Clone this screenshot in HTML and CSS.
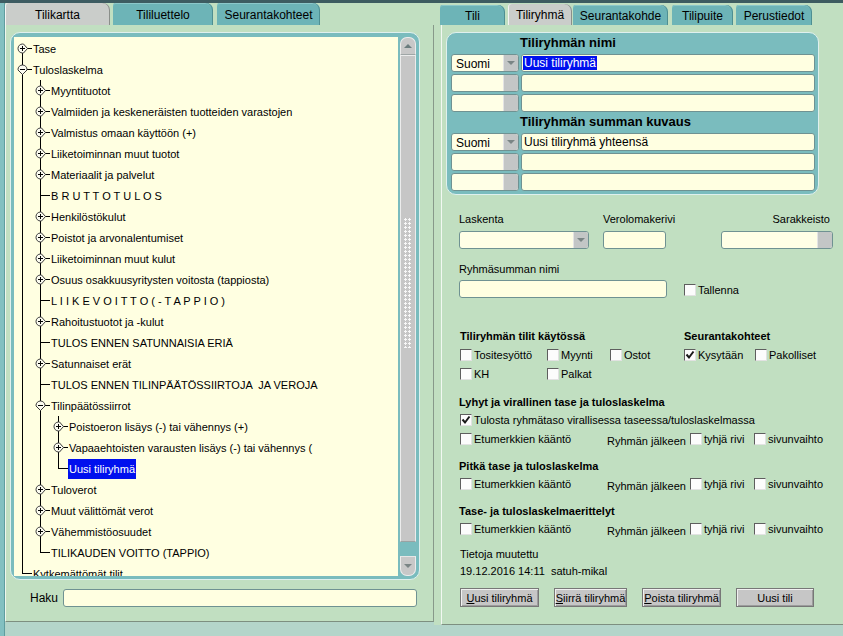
FILE: index.html
```
<!DOCTYPE html>
<html lang="fi">
<head>
<meta charset="utf-8">
<title>Tiliryhmä</title>
<link rel="stylesheet" href="styles.css">
</head>
<body>
<svg class="defs" width="0" height="0" aria-hidden="true">
  <symbol id="plus" viewBox="0 0 11 11"><path d="M5.5 1H6.5L10.5 5.5 6.5 10H5.5A4.5 4.5 0 0 1 5.5 1Z" fill="#fbfbf0" stroke="#3a3a3a"/><path d="M3 5.5H8M5.5 3V8" stroke="#000"/></symbol>
  <symbol id="minus" viewBox="0 0 11 11"><path d="M1 5.5A4.5 4.5 0 0 1 10 5.5V6L5.5 10.5 1 6Z" fill="#fbfbf0" stroke="#3a3a3a"/><path d="M3 5.5H8" stroke="#000"/></symbol>
  <symbol id="check" viewBox="0 0 10 10"><path d="M1.5 4.5 4 7.5 8.5 1.5" fill="none" stroke="#1a1a1a" stroke-width="2"/></symbol>
</svg>
<div class="topbar"></div>
<div class="main">
  <div class="edge"></div>
  <section class="left">
    <nav class="tabs tabs-left">
      <div class="tab active tw105">Tilikartta</div>
      <div class="tab tw100">Tililuettelo</div>
      <div class="tab tw103">Seurantakohteet</div>
    </nav>
    <div class="panel lpanel">
      <div class="treeframe">
        <div class="tree">
          <div class="row"><span class="c first"><svg class="ic"><use href="#plus"/></svg></span><span class="lb">Tase</span></div>
          <div class="row"><span class="c"><svg class="ic"><use href="#minus"/></svg></span><span class="lb">Tuloslaskelma</span></div>
          <div class="row"><span class="g v"></span><span class="c"><svg class="ic"><use href="#plus"/></svg></span><span class="lb">Myyntituotot</span></div>
          <div class="row"><span class="g v"></span><span class="c"><svg class="ic"><use href="#plus"/></svg></span><span class="lb">Valmiiden ja keskeneräisten tuotteiden varastojen</span></div>
          <div class="row"><span class="g v"></span><span class="c"><svg class="ic"><use href="#plus"/></svg></span><span class="lb">Valmistus omaan käyttöön (+)</span></div>
          <div class="row"><span class="g v"></span><span class="c"><svg class="ic"><use href="#plus"/></svg></span><span class="lb">Liiketoiminnan muut tuotot</span></div>
          <div class="row"><span class="g v"></span><span class="c"><svg class="ic"><use href="#plus"/></svg></span><span class="lb">Materiaalit ja palvelut</span></div>
          <div class="row"><span class="g v"></span><span class="c"></span><span class="lb">B R U T T O T U L O S</span></div>
          <div class="row"><span class="g v"></span><span class="c"><svg class="ic"><use href="#plus"/></svg></span><span class="lb">Henkilöstökulut</span></div>
          <div class="row"><span class="g v"></span><span class="c"><svg class="ic"><use href="#plus"/></svg></span><span class="lb">Poistot ja arvonalentumiset</span></div>
          <div class="row"><span class="g v"></span><span class="c"><svg class="ic"><use href="#plus"/></svg></span><span class="lb">Liiketoiminnan muut kulut</span></div>
          <div class="row"><span class="g v"></span><span class="c"><svg class="ic"><use href="#plus"/></svg></span><span class="lb">Osuus osakkuusyritysten voitosta (tappiosta)</span></div>
          <div class="row"><span class="g v"></span><span class="c"></span><span class="lb">L I I K E V O I T T O ( - T A P P I O )</span></div>
          <div class="row"><span class="g v"></span><span class="c"><svg class="ic"><use href="#plus"/></svg></span><span class="lb">Rahoitustuotot ja -kulut</span></div>
          <div class="row"><span class="g v"></span><span class="c"></span><span class="lb">TULOS ENNEN SATUNNAISIA ERIÄ</span></div>
          <div class="row"><span class="g v"></span><span class="c"><svg class="ic"><use href="#plus"/></svg></span><span class="lb">Satunnaiset erät</span></div>
          <div class="row"><span class="g v"></span><span class="c"></span><span class="lb">TULOS ENNEN TILINPÄÄTÖSSIIRTOJA  JA VEROJA</span></div>
          <div class="row"><span class="g v"></span><span class="c"><svg class="ic"><use href="#minus"/></svg></span><span class="lb">Tilinpäätössiirrot</span></div>
          <div class="row"><span class="g v"></span><span class="g v"></span><span class="c"><svg class="ic"><use href="#plus"/></svg></span><span class="lb">Poistoeron lisäys (-) tai vähennys (+)</span></div>
          <div class="row"><span class="g v"></span><span class="g v"></span><span class="c"><svg class="ic"><use href="#plus"/></svg></span><span class="lb">Vapaaehtoisten varausten lisäys (-) tai vähennys (</span></div>
          <div class="row"><span class="g v"></span><span class="g v"></span><span class="c last"></span><span class="lb selected">Uusi tiliryhmä</span></div>
          <div class="row"><span class="g v"></span><span class="c"><svg class="ic"><use href="#plus"/></svg></span><span class="lb">Tuloverot</span></div>
          <div class="row"><span class="g v"></span><span class="c"><svg class="ic"><use href="#plus"/></svg></span><span class="lb">Muut välittömät verot</span></div>
          <div class="row"><span class="g v"></span><span class="c"><svg class="ic"><use href="#plus"/></svg></span><span class="lb">Vähemmistöosuudet</span></div>
          <div class="row"><span class="g v"></span><span class="c last"></span><span class="lb">TILIKAUDEN VOITTO (TAPPIO)</span></div>
          <div class="row"><span class="c last"></span><span class="lb">Kytkemättömät tilit</span></div>
        </div>
        <div class="sb">
          <div class="sb-up"><span class="tri-up"></span></div>
          <div class="sb-thumb"><span class="grip"></span></div>
          <div class="sb-track"></div>
          <div class="sb-down"><span class="tri-down"></span></div>
        </div>
      </div>
      <div class="haku"><span class="haku-lb">Haku</span><div class="inp haku-inp"></div></div>
    </div>
    <div class="foot"></div>
  </section>

  <section class="right">
    <nav class="tabs tabs-right">
      <div class="tab tw65">Tili</div>
      <div class="tab active tw64">Tiliryhmä</div>
      <div class="tab tw95">Seurantakohde</div>
      <div class="tab tw61">Tilipuite</div>
      <div class="tab tw76">Perustiedot</div>
    </nav>
    <div class="panel rpanel">
      <div class="namebox">
        <div class="bh">Tiliryhmän nimi</div>
        <div class="nrow"><div class="sel s68"><span class="st">Suomi</span><span class="arr"><span class="tri-down"></span></span></div><div class="inp grow"><span class="hl">Uusi tiliryhmä</span></div></div>
        <div class="nrow"><div class="sel s68"><span class="st"></span><span class="arr"></span></div><div class="inp grow"></div></div>
        <div class="nrow"><div class="sel s68"><span class="st"></span><span class="arr"></span></div><div class="inp grow"></div></div>
        <div class="bh">Tiliryhmän summan kuvaus</div>
        <div class="nrow"><div class="sel s68"><span class="st">Suomi</span><span class="arr"><span class="tri-down"></span></span></div><div class="inp grow"><span class="it">Uusi tiliryhmä yhteensä</span></div></div>
        <div class="nrow"><div class="sel s68"><span class="st"></span><span class="arr"></span></div><div class="inp grow"></div></div>
        <div class="nrow"><div class="sel s68"><span class="st"></span><span class="arr"></span></div><div class="inp grow"></div></div>
      </div>

      <div class="form">
        <div class="fields">
          <div class="col w130"><div class="flb">Laskenta</div><div class="sel ctl"><span class="st"></span><span class="arr"><span class="tri-down"></span></span></div></div>
          <div class="col w63 ml14"><div class="flb">Verolomakerivi</div><div class="inp ctl"></div></div>
          <div class="col w112 mlauto"><div class="flb right">Sarakkeisto</div><div class="sel ctl"><span class="st"></span><span class="arr"></span></div></div>
        </div>
        <div class="fields fields-b">
          <div class="col w208"><div class="flb">Ryhmäsumman nimi</div><div class="inp ctl2"></div></div>
          <div class="cb tallenna"><span class="box"></span><span>Tallenna</span></div>
        </div>

        <div class="sec grid5 sec1">
          <div class="sh span3">Tiliryhmän tilit käytössä</div>
          <div class="sh span2">Seurantakohteet</div>
          <div class="cb r19"><span class="box"></span><span>Tositesyöttö</span></div>
          <div class="cb r19"><span class="box"></span><span>Myynti</span></div>
          <div class="cb r19"><span class="box"></span><span>Ostot</span></div>
          <div class="cb r19"><span class="box"><svg class="ck"><use href="#check"/></svg></span><span>Kysytään</span></div>
          <div class="cb r19"><span class="box"></span><span>Pakolliset</span></div>
          <div class="cb r19"><span class="box"></span><span>KH</span></div>
          <div class="cb r19"><span class="box"></span><span>Palkat</span></div>
        </div>

        <div class="sec sec2">
          <div class="sh">Lyhyt ja virallinen tase ja tuloslaskelma</div>
          <div class="cb r18"><span class="box"><svg class="ck"><use href="#check"/></svg></span><span>Tulosta ryhmätaso virallisessa taseessa/tuloslaskelmassa</span></div>
          <div class="grid4 r19">
            <div class="cb"><span class="box"></span><span>Etumerkkien kääntö</span></div>
            <div class="after">Ryhmän jälkeen</div>
            <div class="cb"><span class="box"></span><span>tyhjä rivi</span></div>
            <div class="cb"><span class="box"></span><span>sivunvaihto</span></div>
          </div>
        </div>

        <div class="sec sec3">
          <div class="sh">Pitkä tase ja tuloslaskelma</div>
          <div class="grid4 r18">
            <div class="cb"><span class="box"></span><span>Etumerkkien kääntö</span></div>
            <div class="after">Ryhmän jälkeen</div>
            <div class="cb"><span class="box"></span><span>tyhjä rivi</span></div>
            <div class="cb"><span class="box"></span><span>sivunvaihto</span></div>
          </div>
        </div>

        <div class="sec sec3">
          <div class="sh">Tase- ja tuloslaskelmaerittelyt</div>
          <div class="grid4 r18">
            <div class="cb"><span class="box"></span><span>Etumerkkien kääntö</span></div>
            <div class="after">Ryhmän jälkeen</div>
            <div class="cb"><span class="box"></span><span>tyhjä rivi</span></div>
            <div class="cb"><span class="box"></span><span>sivunvaihto</span></div>
          </div>
        </div>

        <div class="info">
          <div class="il">Tietoja muutettu</div>
          <div class="il">19.12.2016 14:11  satuh-mikal</div>
        </div>

        <div class="btns">
          <div class="btn bw79"><span><u>U</u>usi tiliryhmä</span></div>
          <div class="btn bw73"><span><u>S</u>iirrä tiliryhmä</span></div>
          <div class="btn bw79"><span><u>P</u>oista tiliryhmä</span></div>
          <div class="btn bw78"><span>Uusi tili</span></div>
        </div>
      </div>
    </div>
    <div class="foot"></div>
  </section>
</div>
</body>
</html>
```

FILE: styles.css
```
* { box-sizing: border-box; }
html, body { margin: 0; padding: 0; }
body {
  width: 843px;
  height: 636px;
  overflow: hidden;
  background: #c1dfc1;
  font-family: "Liberation Sans", Arial, sans-serif;
  font-size: 11px;
  color: #000;
}
.defs { position: absolute; width: 0; height: 0; overflow: hidden; }

.topbar { height: 3px; background: #3d5c61; }
.main { display: flex; height: 633px; }
.edge { width: 5px; background: #82c0c1; border-right: 1px solid #5f9d9f; }

.left { width: 429px; display: flex; flex-direction: column; }
.right { flex: 1; display: flex; flex-direction: column; }
.foot { flex: 1; background: #b4d5ca; }

/* tabs */
.tabs { display: flex; height: 22px; align-items: flex-end; flex: none; }
.tabs-left { gap: 3px; }
.tabs-right { padding-left: 6px; gap: 3px; }
.tab {
  height: 22px;
  font-size: 12px;
  display: flex;
  align-items: center;
  justify-content: center;
  background: #6db4b7;
  border-radius: 3px 7px 0 0;
  box-shadow: inset -1px 0 0 #4e8f92, inset 0 1px 0 #8cc8ca;
  padding-top: 1px;
}
.tab.active { background: #cacdca; box-shadow: inset 1px 0 0 #f4f4f4, inset -1px 0 0 #8a8f8a; }
.tabs-right .tab { height: 20px; }
.tabs-right .tab.active { height: 21px; }
.tw105 { width: 105px; }
.tw100 { width: 100px; margin-left: 0; }
.tw103 { width: 103px; margin-left: 1px; }
.tw65 { width: 65px; }
.tw64 { width: 64px; }
.tw95 { width: 95px; margin-left: -2px; }
.tw61 { width: 61px; margin-left: 1px; }
.tw76 { width: 76px; }

/* panels */
.panel { background: #c1dfc1; flex: none; }
.lpanel {
  height: 597px;
  border-left: 1px solid #eef6ee;
  border-right: 1px solid #87998a;
  border-bottom: 1px solid #7d8f80;
  padding: 7px 0 0 4px;
}
.rpanel {
  height: 600px;
  margin-left: 7px;
  border-left: 1px solid #f2f8f2;
  border-bottom: 1px solid #7d8f80;
}

/* tree frame */
.treeframe {
  width: 410px;
  height: 548px;
  background: #7abcbe;
  border: 1px solid #dff0ee;
  border-radius: 10px;
  padding: 4px 3px 3px 3px;
  display: flex;
  gap: 2px;
}
.tree {
  width: 384px;
  height: 539px;
  background: #ffffe1;
  overflow: hidden;
  padding-top: 1px;
}
.row { display: flex; height: 21px; }
.g, .c { width: 18px; flex: none; }
.g.v { background: linear-gradient(#000, #000) 8px 0 / 1px 100% no-repeat; }
.c {
  display: flex;
  align-items: center;
  background-image: linear-gradient(#000, #000), linear-gradient(#000, #000);
  background-repeat: no-repeat;
  background-position: 8px 0, 8px 10px;
  background-size: 1px 21px, 10px 1px;
}
.c.last { background-size: 1px 11px, 10px 1px; }
.c.first { background-position: 8px 10px, 8px 10px; background-size: 1px 11px, 10px 1px; }
.ic { width: 11px; height: 11px; margin-left: 3px; display: block; }
.lb {
  padding: 0 1px;
  height: 20px;
  line-height: 20px;
  white-space: pre;
  align-self: center;
}
.lb.selected { background: #0010ee; color: #fff; }

/* scrollbar */
.sb { width: 16px; display: flex; flex-direction: column; }
.sb-up, .sb-down {
  background: #c8c8c8;
  border: 1px solid #ececec;
  display: flex;
  align-items: center;
  justify-content: center;
}
.sb-up { height: 18px; border-radius: 7px 7px 0 0; border-bottom-color: #9fa6a6; }
.sb-down { height: 20px; border-radius: 0 0 7px 7px; border-top-color: #e6e6e6; }
.sb-thumb {
  height: 487px;
  background: #c6c6c6;
  border: 1px solid #ececec;
  border-bottom-color: #9aa3a3;
  display: flex;
  align-items: center;
  justify-content: center;
}
.grip {
  width: 8px;
  height: 130px;
  margin-bottom: 32px;
  background: radial-gradient(circle at 1.5px 1.5px, #f8f8f8 1px, transparent 1.4px) 0 0 / 4px 4px;
}
.sb-track { flex: 1; }
.tri-up { width: 0; height: 0; border-left: 4px solid transparent; border-right: 4px solid transparent; border-bottom: 4px solid #6b7d7e; }
.tri-down { width: 0; height: 0; border-left: 4px solid transparent; border-right: 4px solid transparent; border-top: 4px solid #7a8585; }

/* haku */
.haku { display: flex; align-items: center; margin-top: 8px; padding-left: 20px; height: 20px; }
.haku-lb { font-size: 12px; width: 28px; margin-right: 5px; }
.haku-inp { width: 354px; height: 20px; }

/* inputs */
.inp {
  background: #ffffe1;
  border: 1px solid #6f9292;
  border-radius: 3px;
  height: 18px;
  font-size: 12px;
  display: flex;
  align-items: center;
}
.grow { flex: 1; }
.sel {
  background: #ffffe6;
  border: 1px solid #6f9292;
  border-radius: 3px;
  height: 18px;
  display: flex;
  font-size: 12px;
  overflow: hidden;
}
.s68 { width: 68px; flex: none; }
.st { flex: 1; padding-left: 4px; line-height: 18px; }
.arr { width: 15px; background: #c3c6c6; display: flex; align-items: center; justify-content: center; border-left: 1px solid #e4e4e4; }
.hl { background: #0010ee; color: #fff; margin-left: 1px; padding: 0 1px; line-height: 14px; }
.it { padding-left: 2px; }

/* name box */
.namebox {
  width: 373px;
  margin: 7px 0 0 4px;
  background: #7abcbe;
  border: 1px solid #dff0ee;
  border-radius: 10px;
  padding: 0 3px 3px 4px;
}
.bh {
  height: 21px;
  line-height: 19px;
  padding-left: 69px;
  font-size: 13px;
  font-weight: bold;
}
.nrow { display: flex; gap: 2px; height: 18px; margin-top: 2px; }
.bh + .nrow { margin-top: 0; }

/* form */
.form { padding: 0 10px 0 17px; }
.fields { display: flex; margin-top: 17px; }
.fields-b { margin-top: 13px; align-items: flex-end; }
.col { display: flex; flex-direction: column; flex: none; }
.flb { line-height: 14px; height: 14px; }
.flb.right { text-align: right; padding-right: 3px; }
.ctl { margin-top: 5px; }
.ctl2 { margin-top: 4px; }
.w130 { width: 130px; }
.w63 { width: 63px; }
.w112 { width: 112px; }
.w208 { width: 208px; }
.ml14 { margin-left: 14px; }
.mlauto { margin-left: auto; }

.cb { display: flex; align-items: center; white-space: nowrap; }
.box {
  width: 12px;
  height: 12px;
  flex: none;
  background: #fcfcfc;
  border: 1px solid;
  border-color: #5e5e5e #e2e2e2 #e2e2e2 #5e5e5e;
  margin-right: 2px;
  display: flex;
  align-items: center;
  justify-content: center;
}
.ck { width: 10px; height: 10px; display: block; }
.tallenna { margin-left: 17px; height: 18px; padding-top: 2px; }

.sec { margin-top: 10px; }
.sec1 { margin-top: 30px; }
.sec2 { margin-top: 11px; }
.grid5 { display: grid; grid-template-columns: 87px 63px 74px 71px auto; padding-left: 1px; }
.span3 { grid-column: span 3; }
.span2 { grid-column: span 2; }
.sh { font-weight: bold; height: 17px; line-height: 17px; }
.r19 { height: 19px; }
.r18 { height: 18px; }
.sec2 .cb.r18, .grid4 { padding-left: 1px; }
.grid4 { display: grid; grid-template-columns: 147px 83px 64px auto; align-items: center; }
.after { padding-top: 4px; }

.info { margin-top: 8px; padding-left: 1px; }
.il { height: 17px; line-height: 17px; white-space: pre; }

.btns { display: flex; gap: 15px; margin-top: 8px; padding-left: 1px; }
.btn {
  height: 19px;
  font-size: 11px;
  white-space: nowrap;
  background: #c6c6c6;
  border: 1px solid #777;
  box-shadow: inset 1px 1px 0 #f0f0f0, inset -1px -1px 0 #9c9c9c;
  display: flex;
  align-items: center;
  justify-content: center;
  flex: none;
}
.bw79 { width: 79px; }
.bw73 { width: 73px; }
.bw78 { width: 78px; }
```
